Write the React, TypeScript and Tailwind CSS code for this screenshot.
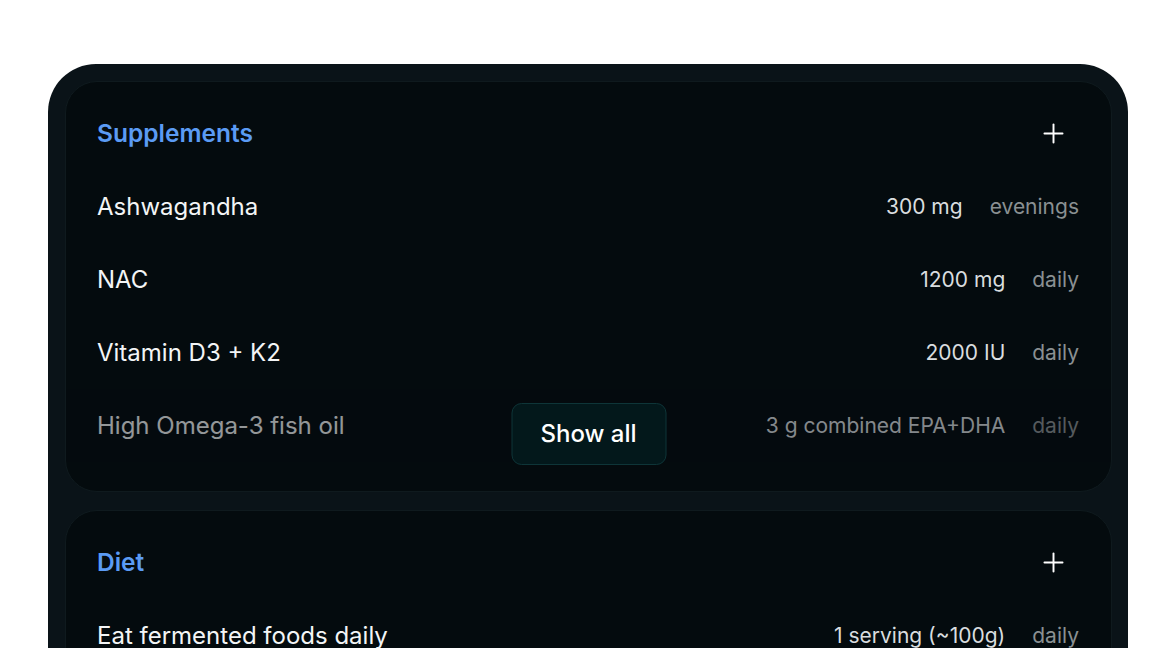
import { Plus } from "lucide-react";

type Item = { name: string; amount: string; freq: string };

const supplements: Item[] = [
  { name: "Ashwagandha", amount: "300 mg", freq: "evenings" },
  { name: "NAC", amount: "1200 mg", freq: "daily" },
  { name: "Vitamin D3 + K2", amount: "2000 IU", freq: "daily" },
  { name: "High Omega-3 fish oil", amount: "3 g combined EPA+DHA", freq: "daily" },
];

const diet: Item[] = [
  { name: "Eat fermented foods daily", amount: "1 serving (~100g)", freq: "daily" },
];

function Row({ item }: { item: Item }) {
  return (
    <div className="flex h-[73px] items-center justify-between">
      <span className="text-[24px] text-[#f3f5f6]">{item.name}</span>
      <div className="flex items-center gap-[27px] text-[21px]">
        <span className="text-[#d9dddf]">{item.amount}</span>
        <span className="text-[#8a9092]">{item.freq}</span>
      </div>
    </div>
  );
}

function Section({
  title,
  items,
  collapsed,
}: {
  title: string;
  items: Item[];
  collapsed?: boolean;
}) {
  return (
    <section className="relative rounded-[32px] border border-[#0f1a1e] bg-[#040b0e] pb-[29px] pl-[31px] pr-[32px] pt-[15px]">
      <div className="flex h-[73px] items-center justify-between">
        <h2 className="text-[24.5px] font-semibold text-[#5b9bf4]">{title}</h2>
        <button className="mr-[6px] flex h-10 w-10 items-center justify-center text-white">
          <Plus size={31} strokeWidth={1.5} />
        </button>
      </div>
      {items.map((it) => (
        <Row key={it.name} item={it} />
      ))}
      {collapsed && (
        <>
          {/* fade the last visible row */}
          <div className="pointer-events-none absolute inset-x-0 bottom-[29px] h-[73px] bg-[#040b0e]/40" />
          <button className="absolute bottom-[26px] left-1/2 h-[62px] w-[155px] -translate-x-1/2 rounded-[10px] border border-[#0e3538] bg-[#03181b] text-[24px] font-medium text-white">
            Show all
          </button>
        </>
      )}
    </section>
  );
}

export default function App() {
  return (
    <div
      className="h-[648px] overflow-hidden bg-white px-[48px] pt-[64px]"
      style={{ fontFamily: "Inter, 'Noto Sans', sans-serif" }}
    >
      <div className="flex flex-col gap-[18px] rounded-[48px] bg-[#0a1318] pb-[18px] pl-[17px] pr-[16px] pt-[17px]">
        <Section title="Supplements" items={supplements} collapsed />
        <Section title="Diet" items={diet} />
      </div>
    </div>
  );
}
